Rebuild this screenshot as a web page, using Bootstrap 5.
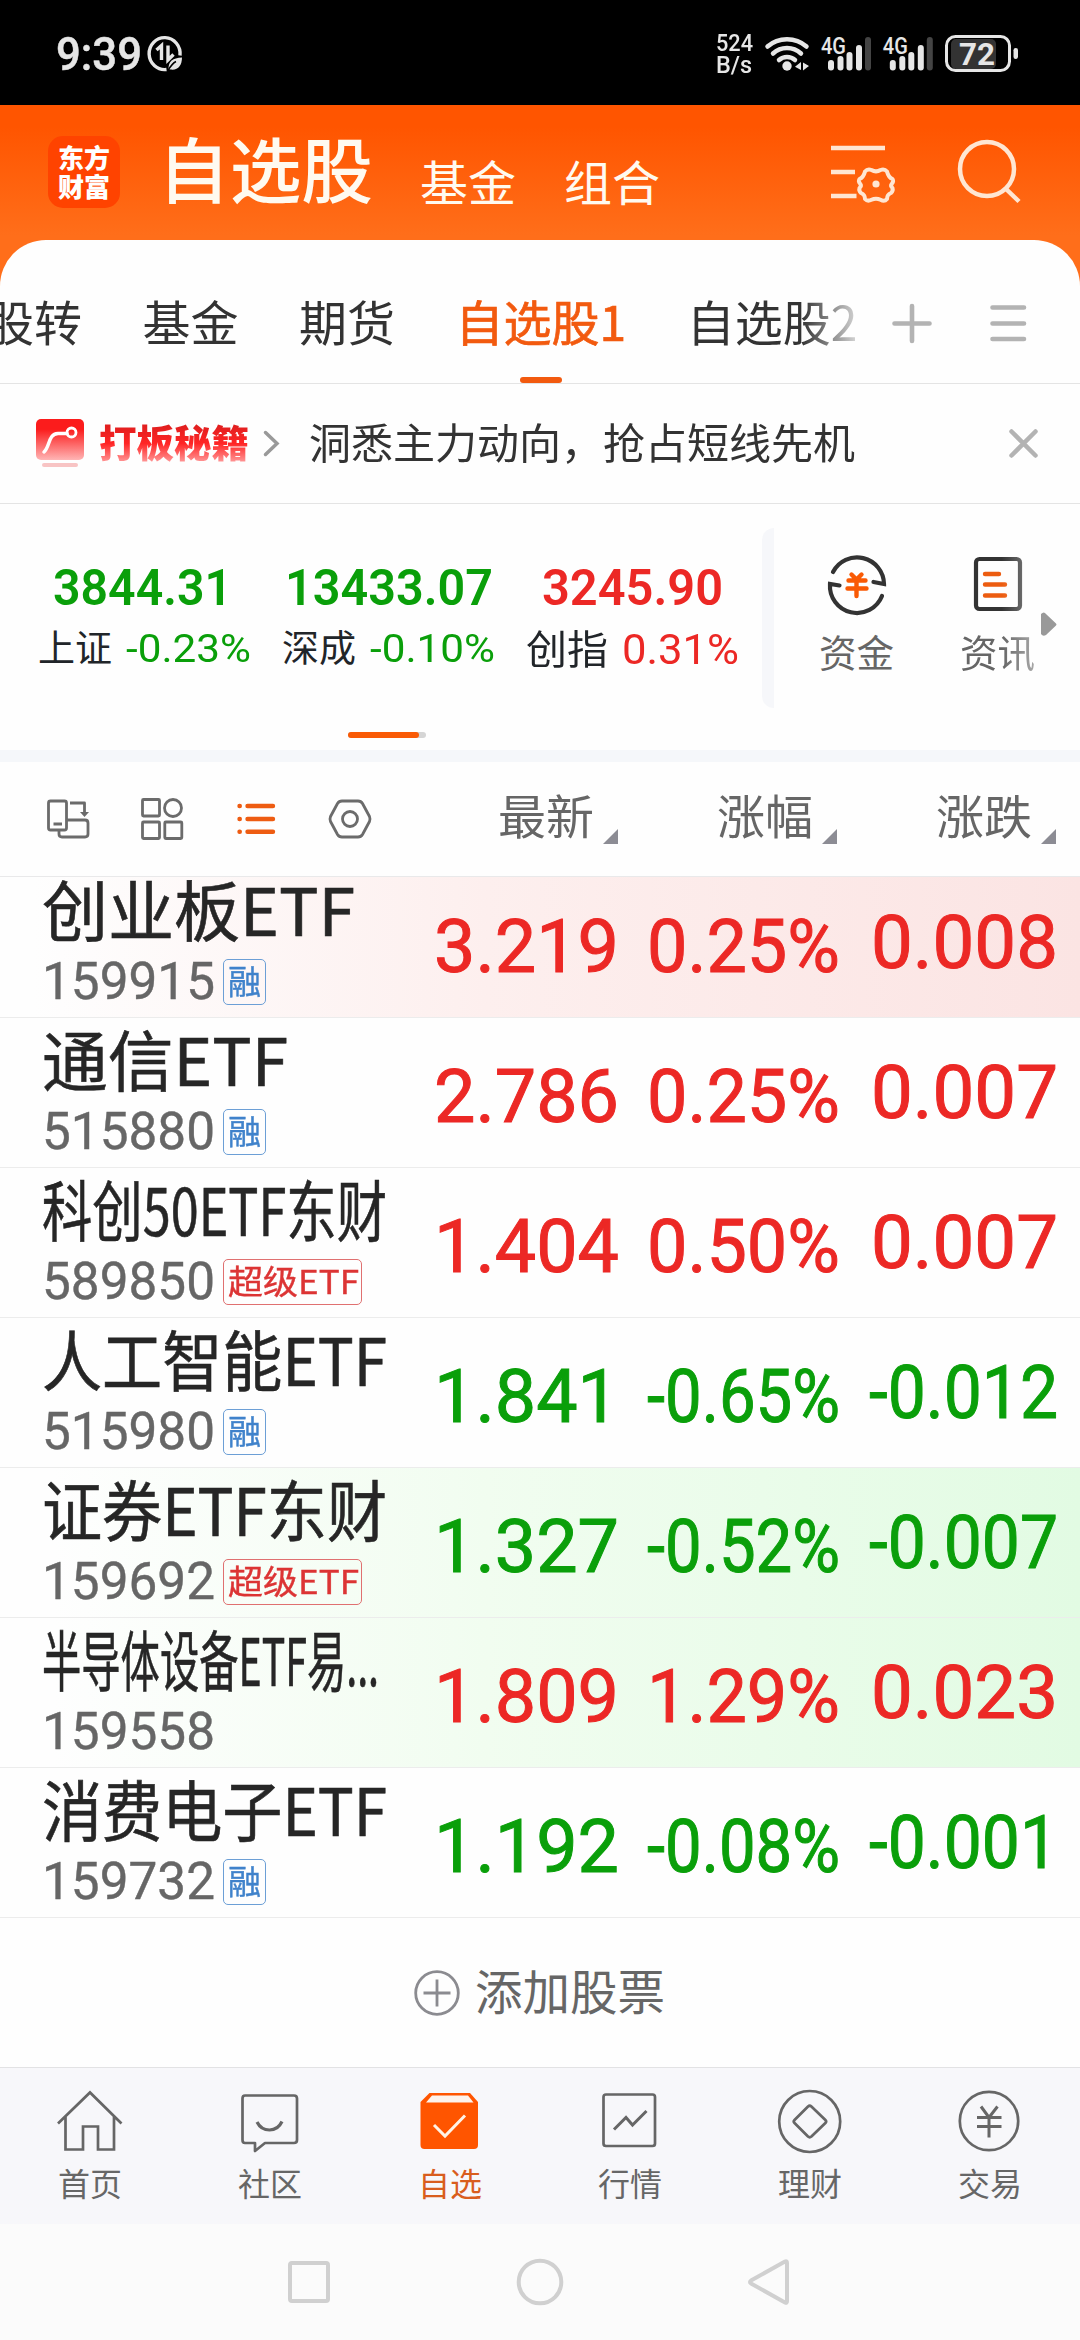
<!DOCTYPE html>
<html lang="zh-CN">
<head>
<meta charset="utf-8">
<meta name="viewport" content="width=device-width, initial-scale=1">
<title>自选股</title>
<link rel="stylesheet" href="https://cdn.jsdelivr.net/npm/bootstrap@5.3.0/dist/css/bootstrap.min.css">
<style>
:root{--up:#ec2825;--down:#0a9f0a;--brand:#f25a0f}
body{width:1080px;height:2340px;overflow:hidden;background:#fefefe;color:#333;font-family:"Noto Sans CJK SC",sans-serif;line-height:1}
svg{display:block;flex:none;overflow:visible}
.num{font-family:Roboto,"Noto Sans CJK SC",sans-serif}
.up{color:var(--up)}.down{color:var(--down)}
.fit{display:inline-block;white-space:nowrap;text-align:left}
.fit>span{display:inline-block;transform-origin:0 50%}
.statusbar{height:105px;background:#000;color:#e6e6e6;padding-left:56px}
.clock{font-size:46px;font-weight:500;line-height:54px;margin-top:27px;-webkit-text-stroke:.5px}
.speed{font-size:24px;font-weight:500;line-height:21.5px;margin:33px 12px 0 0}
.apphead{height:181px;margin-bottom:-46px;padding-left:48px;background:linear-gradient(#ff5500 12%,#ff6e1a 72%);color:#fffaf0}
.logo{width:72px;height:72px;border-radius:15px;background:#ff4300;color:#fff;font-size:26px;line-height:29px;font-weight:900;padding-top:6px;margin-top:31px}
.t1{font-size:71px;font-weight:500;line-height:80px;margin:21px 0 0 38px}
.t2{font-size:48px;line-height:60px;margin-top:45px}
.sheet{border-radius:46px 46px 0 0;background:#fefefe;height:144px;border-bottom:1px solid #e4e4e4}
.tabs{width:862px;overflow:hidden;height:143px;padding-top:50px;gap:60.5px;font-size:48px;line-height:60px;-webkit-mask:linear-gradient(90deg,#000 93%,transparent 101%)}
.tabs span{white-space:nowrap;flex:none}
.tabs span:first-child{margin-left:-14px}
.tabs .on{color:var(--brand);-webkit-text-stroke:.7px;height:93px}
.tabs .on::after{content:"";display:block;width:42px;height:6px;border-radius:3px;background:var(--brand);margin:27px auto 0}
.promo{height:120px;border-bottom:1px solid #e4e4e4;padding-left:36px}
.promo-t{font-size:38px;font-weight:900;line-height:48px}
.promo-t .fit>span{background:linear-gradient(#e21f1f 20%,#ff2525 55%,#ff9a9a 95%);-webkit-background-clip:text;background-clip:text;color:transparent}
.idx{height:246px}
.idx-v{font-size:50px;font-weight:600;line-height:56px}
.idx-c{line-height:50px;margin-top:8px}
.sep{width:12px;height:180px;margin-top:24px;border-radius:14px 0 0 14px;background:#f6f7fa}
.quick{font-size:37.5px;color:#666;line-height:46px}
.fadeout{-webkit-mask:linear-gradient(90deg,#000 55%,rgba(0,0,0,.55) 100%)}
.band{height:12px;background:#f5f7fa}
.tools{height:115px;border-bottom:1px solid #e9e9ea}
.th{font-size:47px;color:#666;line-height:60px}
.list{height:1041px;overflow:hidden}
.stock{height:150px;border-bottom:1px solid #ececec}
.hot{background:linear-gradient(90deg,#fefefe 3%,#fdefee 45%,#fbe4e3)}
.cool{background:linear-gradient(90deg,#fefefe 5%,#f1fdf0 45%,#e2fbe3)}
.who{width:434px;padding:9px 0 0 42px}
.nm{font-size:66px;line-height:60px;height:60px;color:#262626;-webkit-text-stroke:.6px #262626}
.code{font-size:51px;line-height:51px;color:#666;margin-top:19px;gap:8px;-webkit-text-stroke:.4px}
.tag{height:46px;border:1.5px solid;border-radius:5px;font-size:32.5px;line-height:40px;padding-left:4px}
.rz{color:#3f82cb;width:43px;border-color:#6c9fd6}.sup{color:#dc3434;width:139px;border-color:#e07070}
.v{font-size:75px;line-height:80px;padding-top:38px;-webkit-text-stroke:1px}
.v3{padding-top:34px}
.stock:first-child{height:141px}
.stock:first-child .who{padding-top:0}
.stock:first-child .v{padding-top:29px}
.stock:first-child .v3{padding-top:25px}
.add{height:149px;font-size:47.5px;color:#666;padding-right:1px}
.tabbar{height:157px;border-top:1px solid #e2e2e4;background:#f7f7fa;color:#666;font-size:32px}
.tabbar>div{width:180px;padding-top:18px}
.tabbar .lb{line-height:40px;margin-top:4px}
.sys{height:116px;background:#fbfbfb}
</style>
<script src="https://cdn.jsdelivr.net/npm/bootstrap@5.3.0/dist/js/bootstrap.bundle.min.js"></script>
</head>
<body>
<div class="statusbar d-flex num">
  <div class="clock"><span class="fit" data-w="86">9:39</span></div>
  <svg style="margin:36px 0 0 6px" width="35" height="36" viewBox="0 0 35 36" fill="none" stroke="#e6e6e6" stroke-width="3.4"><path d="M32 19.500A15.500 16 0 1 0 18.500 33.500"/><path d="M8.500 14l5-4.500v14.500M20 9.500v14.500l5.500-5.500" stroke-width="3.400"/><path d="M20.500 33c0-8 4-11 13.500-11.500 0 8-4 13-11.500 12z" fill="#e6e6e6" stroke="none"/><path d="M20 34.500q4-7 8-9" stroke="#000" stroke-width="1.500"/></svg>
  <div class="speed ms-auto text-start"><span class="fit" data-w="37">524</span><br><span class="fit" data-w="36">B/s</span></div>
  <svg width="315" height="105" viewBox="765 0 315 105" fill="#e6e6e6">
    <g fill="none" stroke="#e6e6e6" stroke-width="4.500" stroke-linecap="round"><path d="M767.500 46.500a28.500 27 0 0 1 39 0M773 53.500a20 19 0 0 1 28 0M779 60a12 12 0 0 1 16 0"/></g>
    <circle cx="787" cy="66" r="4.700"/><path d="M801 62v8l-6-3.300zM803 62.500v8l6-4.500z"/>
    <g id="sig"><text x="821" y="53.500" font-size="23" font-weight="500" textLength="25" lengthAdjust="spacingAndGlyphs">4G</text>
    <rect x="828" y="60" width="6" height="10.500" rx="3"/><rect x="837.500" y="56" width="6" height="14.500" rx="3"/><rect x="846.500" y="52" width="6" height="18.500" rx="3"/><rect x="856" y="45" width="6" height="25.500" rx="3"/><rect x="865" y="37" width="6" height="33.500" rx="3" fill="#444"/></g>
    <use href="#sig" x="61.800"/>
    <rect x="951" y="39" width="45" height="30" rx="5" fill="#333"/><rect x="946.500" y="36.500" width="63" height="34" rx="9" fill="none" stroke="#e6e6e6" stroke-width="3"/><rect x="1013.500" y="48" width="4.500" height="11" rx="2.200"/>
    <text x="959" y="65" font-size="32" font-weight="700" textLength="36" lengthAdjust="spacingAndGlyphs">72</text>
  </svg>
</div>

<header class="apphead d-flex">
  <div class="logo text-center">东方<br>财富</div>
  <div class="t1"><span class="fit" data-w="215">自选股</span></div>
  <div class="t2" style="margin-left:47px">基金</div>
  <div class="t2" style="margin-left:48px">组合</div>
  <svg style="margin:35px 0 0 auto" width="254" height="70" viewBox="826 140 254 70" fill="none" stroke="#ffe6d2" stroke-width="4.500">
    <path d="M831 148h54M831 172h24M831 196h25.500"/>
    <path stroke-width="4" stroke-linejoin="round" d="M871.500 170q4.500 2.800 9 0 4-1.500 6.500 1.500 1.500 6 5.500 7.500 1.500 2.500-.8 5-1.500 2 .8 4 .8 3-1.500 5-4 1.500-4 6-2.500 3-6.500 .8-4.500-2.300-9 0-4 2-6.500-.8 0-4.500-4-6-2.300-2-1.500-5 2.300-2 .8-4-2.300-2.500-.8-5 4-1.500 5.500-7.500 2.500-3 6.500-1.500z"/>
    <circle cx="876" cy="184" r="3.600" fill="#ffe6d2" stroke="none"/>
    <circle cx="987" cy="169" r="27"/><path d="M1005 188l14 13.500"/>
  </svg>
</header>

<nav class="sheet d-flex position-relative">
  <div class="tabs d-flex"><span>股转</span><span>基金</span><span>期货</span><span class="on">自选股1</span><span>自选股2</span></div>
  <svg width="218" height="143" viewBox="862 240 218 143" fill="none" stroke="#b3b3b3" stroke-width="4.600" stroke-linecap="round"><path d="M894.500 323.500h35M912 306v35M992.500 307.500h31.500M992.500 323.500h31.500M992.500 339h31.500"/></svg>
</nav>

<section class="promo d-flex align-items-center">
  <svg width="48" height="49" viewBox="0 0 48 49"><defs><linearGradient id="rg" x2="0" y2="1"><stop offset=".25" stop-color="#fb1c1c"/><stop offset="1" stop-color="#ffb5b5"/></linearGradient></defs><rect width="48" height="41" rx="5" fill="url(#rg)"/><rect x="6" y="44" width="36" height="4" rx="2" fill="#f8c4c4"/><path d="M8 33c6-5 4-18 14-18.500h9" fill="none" stroke="#fff" stroke-width="3.500" stroke-linecap="round"/><circle cx="35.500" cy="13.500" r="4.500" fill="none" stroke="#fff" stroke-width="2.800"/></svg>
  <div class="promo-t" style="margin:-5px 0 0 15px"><span class="fit" data-w="150">打板秘籍</span></div>
  <svg style="margin-left:14px" width="16" height="27" viewBox="0 0 16 27" fill="none" stroke="#999" stroke-width="3.500" stroke-linecap="round"><path d="M2.500 2.500l11.500 11-11.500 11"/></svg>
  <div style="font-size:42px;line-height:56px;margin:-6px 0 0 30px"><span class="fit" data-w="546">洞悉主力动向，抢占短线先机</span></div>
  <svg class="ms-auto" style="margin-right:42px" width="29" height="29" viewBox="0 0 29 29" stroke="#b3b3b3" stroke-width="4.500" stroke-linecap="round"><path d="M2.500 2.500l24 24M26.500 2.500l-24 24"/></svg>
</section>

<section class="idx d-flex flex-column">
 <div class="d-flex">
  <div style="width:762px;padding:56px 0 0 38px" class="d-flex">
    <div style="width:244px"><div class="idx-v num down" style="padding-left:15px"><span class="fit" data-w="179">3844.31</span></div><div class="idx-c num down" style="font-size:39px"><span class="fit text-dark" style="font-size:37px" data-w="74">上证</span><span class="fit" style="margin-left:14px" data-w="125">-0.23%</span></div></div>
    <div style="width:244px"><div class="idx-v num down" style="padding-left:3px"><span class="fit" data-w="208">13433.07</span></div><div class="idx-c num down" style="font-size:39px"><span class="fit text-dark" style="font-size:37px" data-w="74">深成</span><span class="fit" style="margin-left:14px" data-w="125">-0.10%</span></div></div>
    <div><div class="idx-v num up" style="padding-left:16px"><span class="fit" data-w="181">3245.90</span></div><div class="idx-c num up" style="font-size:43px"><span class="fit text-dark" style="font-size:40px" data-w="82">创指</span><span class="fit" style="margin-left:14px" data-w="117">0.31%</span></div></div>
  </div>
  <div class="sep"></div>
  <div class="quick d-flex position-relative" style="padding:50px 0 0 45px">
    <div style="width:76px"><svg class="mx-auto" width="60" height="60" viewBox="826 555 60 60" fill="none" stroke="#333" stroke-width="4.200" stroke-linecap="round"><path d="M832 573a27 27 0 0 1 51 12l-10.500-2M881 597a27 27 0 0 1-52-12l9.500 1.500"/><path stroke="#f95a05" stroke-width="4.400" d="M850.500 575.500l5 5 5-5M847.500 581.500h17M846.500 589.500h19M855.500 582v15"/></svg><div style="margin-top:14px">资金</div></div>
    <div style="width:76px;margin-left:65px" class="fadeout"><svg class="mx-auto" width="48" height="60" viewBox="973 555 48 60" fill="none" stroke="#333" stroke-width="4.200" stroke-linecap="round"><rect x="975" y="560" width="44" height="50" rx="3.500"/><path stroke="#ec5c10" stroke-width="4.400" d="M984 575h14M984 585.500h20M984 596.500h20"/></svg><div style="margin-top:14px">资讯</div></div>
    <svg style="margin:58px 0 0 5px" width="16" height="24" viewBox="1041 612 16 24"><path d="M1041 614q3-3 5 0l10 9.500q1 1 0 2l-10 9.500q-3 2-5-1z" fill="#999"/></svg>
  </div>
 </div>
 <div class="mt-auto rounded-pill" style="width:78px;height:6px;background:#d5d5d5;margin:0 0 12px 348px"><div class="rounded-pill" style="width:71px;height:6px;background:#f95a05"></div></div>
</section>
<div class="band"></div>

<section class="tools d-flex">
  <svg width="498" height="114" viewBox="0 762 498 114" fill="none" stroke="#6b6b6b" stroke-width="2.800" stroke-linejoin="round">
    <rect x="48.500" y="801" width="18" height="29" rx="2"/><path d="M53.500 824h8.500M67 820h18q3 0 3 3v11q0 3-3 3H62q-3 0-3-3v-4M70 803h14.500v11"/><path d="M80 812h9l-4.500 5z" fill="#6b6b6b" stroke="none"/>
    <g stroke-width="2.800"><rect x="142.500" y="799.500" width="17" height="16.500" rx="1"/><circle cx="173" cy="808" r="8.500"/><rect x="142.500" y="822" width="17" height="16.500" rx="1"/><rect x="164.800" y="822" width="17" height="16.500" rx="1"/></g>
    <g stroke="#ee5c12" stroke-width="4.400" stroke-linecap="round"><path d="M247.500 806H273M247.500 819H273M247.500 831.800H273M239.500 806h.3M239.500 819h.3M239.500 831.800h.3"/></g>
    <path d="M342 801h16q3 0 4.500 2.500l7 13q1 2.500 0 5l-7 13q-1.500 2.500-4.500 2.500h-16q-3 0-4.500-2.500l-7-13q-1-2.500 0-5l7-13q1.500-2.500 4.500-2.500z"/><circle cx="350" cy="819" r="7.500"/>
  </svg>
  <div class="th d-flex" style="padding-top:22px"><span class="fit" data-w="96">最新</span><svg style="margin:45px 0 0 9px" width="15" height="15"><path d="M15 0v15H0z" fill="#8c8c94"/></svg></div>
  <div class="th d-flex" style="padding:22px 0 0 99px"><span class="fit" data-w="96">涨幅</span><svg style="margin:45px 0 0 9px" width="15" height="15"><path d="M15 0v15H0z" fill="#8c8c94"/></svg></div>
  <div class="th d-flex" style="padding:22px 0 0 99px"><span class="fit" data-w="96">涨跌</span><svg style="margin:45px 0 0 9px" width="15" height="15"><path d="M15 0v15H0z" fill="#8c8c94"/></svg></div>
</section>

<main class="list" id="list"></main>

<div class="add d-flex justify-content-center align-items-center">
  <svg width="46" height="46" viewBox="0 0 46 46" fill="none" stroke="#8b8b90" stroke-width="2.800"><circle cx="23" cy="23" r="21.300"/><path d="M9.500 23h27M23 9.500v27"/></svg>
  <span style="margin-left:15px;line-height:60px;margin-top:-5px">添加股票</span>
</div>

<nav class="tabbar d-flex text-center">
  <div><svg class="mx-auto" width="72" height="72" viewBox="54 2086 72 72" fill="none" stroke="#666" stroke-width="2.700"><path d="M58 2123.500l32-31 31.500 31M65.500 2117v32.500h17.500V2126.500h15v23h16V2117"/></svg><div class="lb">首页</div></div>
  <div><svg class="mx-auto" width="72" height="72" viewBox="234 2086 72 72" fill="none" stroke="#666" stroke-width="2.700" stroke-linejoin="round"><path d="M245 2095.500h49q3 0 3 3v41.500q0 3-3 3h-29l-10 8v-8h-10q-2.500 0-2.500-3v-41.500q0-3 2.500-3z"/><path stroke-width="3.200" d="M257 2122q4 8 12.500 8t12.500-8.500"/></svg><div class="lb">社区</div></div>
  <div style="color:#d95d1d"><svg class="mx-auto" width="72" height="72" viewBox="414 2086 72 72"><path d="M420.500 2102l9-9h40.500l8 9v43q0 4-4 4h-49.500q-4 0-4-4z" fill="#ff5500"/><path d="M426 2102.500l6-7h36l5.500 7z" fill="#fdf3ec"/><path d="M434 2125l11 11 20-20.500" fill="none" stroke="#fff3e6" stroke-width="3"/></svg><div class="lb">自选</div></div>
  <div><svg class="mx-auto" width="72" height="72" viewBox="594 2086 72 72" fill="none" stroke="#666" stroke-width="2.700"><rect x="603.500" y="2094.500" width="51.500" height="51.500" rx="2.500"/><path stroke-width="3" d="M614 2129.500l12-12 6.500 7.500 14-14"/></svg><div class="lb">行情</div></div>
  <div><svg class="mx-auto" width="72" height="72" viewBox="774 2086 72 72" fill="none" stroke="#666" stroke-width="2.700" stroke-linejoin="round"><circle cx="809.700" cy="2121.500" r="30.500"/><path d="M808 2106.500q1.700-1.500 3.400 0l14 13.500q1.500 1.500 0 3l-14 13.500q-1.700 1.500-3.400 0l-13.500-13.500q-1.500-1.500 0-3z"/></svg><div class="lb">理财</div></div>
  <div><svg class="mx-auto" width="72" height="72" viewBox="954 2086 72 72" fill="none" stroke="#666" stroke-width="2.700"><circle cx="989" cy="2121" r="29.200"/><path stroke-width="3" d="M981 2106.500l8 11 8.500-11M977 2117.500h24.500M977 2126.500h24.500M989 2117v20.500"/></svg><div class="lb">交易</div></div>
</nav>
<div class="sys"><svg width="1080" height="116" viewBox="0 2224 1080 116" fill="none" stroke="#d0d0d0" stroke-width="4" stroke-linejoin="round"><rect x="290" y="2263" width="38" height="38" rx="2"/><circle cx="540" cy="2282" r="21.300"/><path d="M785 2261.500q2-1 2 1.500v38q0 2.500-2 1.500l-34-19q-2-1.500 0-3z"/></svg></div>

<script>
const stocks = [
  ['创业板ETF',313,'159915','rz','3.219','0.25%','0.008','hot'],
  ['通信ETF',246,'515880','rz','2.786','0.25%','0.007',''],
  ['科创50ETF东财',345,'589850','sup','1.404','0.50%','0.007',''],
  ['人工智能ETF',345,'515980','rz','1.841','-0.65%','-0.012',''],
  ['证券ETF东财',345,'159692','sup','1.327','-0.52%','-0.007','cool'],
  ['半导体设备ETF易...',337,'159558','','1.809','1.29%','0.023','cool'],
  ['消费电子ETF',345,'159732','rz','1.192','-0.08%','-0.001','']
];
const tags = {
  rz: '<span class="tag rz"><span class="fit" data-w="33">融</span></span>',
  sup: '<span class="tag sup"><span class="fit" data-w="131">超级ETF</span></span>',
  '': ''
};
document.getElementById('list').innerHTML = stocks.map(([name, w, code, tag, price, pct, diff, bg]) => {
  const tone = pct[0] === '-' ? 'down' : 'up';
  return `<div class="stock d-flex ${bg}">
    <div class="who"><div class="nm"><span class="fit" data-w="${w}">${name}</span></div>
      <div class="code d-flex align-items-center"><span class="fit num" data-w="173">${code}</span>${tags[tag]}</div></div>
    <div class="v num ${tone}" style="width:213px"><span class="fit" data-w="185">${price}</span></div>
    <div class="v num ${tone}" style="width:${tone === 'up' ? 224 : 222}px"><span class="fit" data-w="193">${pct}</span></div>
    <div class="v v3 num ${tone}"><span class="fit" data-w="${tone === 'up' ? 187 : 189}">${diff}</span></div>
  </div>`;
}).join('');

document.querySelectorAll('.fit').forEach(el => {
  el.innerHTML = `<span>${el.textContent}</span>`;
  const inner = el.firstChild, w = +el.dataset.w;
  const natural = inner.getBoundingClientRect().width;
  inner.style.transform = `scaleX(${w / natural})`;
  inner.style.marginRight = (w - natural) + 'px';
});
</script>
</body>
</html>
